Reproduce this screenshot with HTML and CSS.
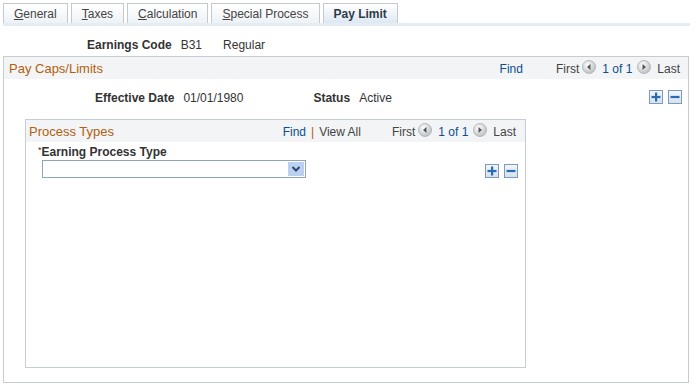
FILE: index.html
```html
<!DOCTYPE html>
<html>
<head>
<meta charset="utf-8">
<link rel="stylesheet" href="styles.css">
</head>
<body>
<div class="tabs">
  <div class="tab"><u>G</u>eneral</div>
  <div class="tab"><u>T</u>axes</div>
  <div class="tab"><u>C</u>alculation</div>
  <div class="tab"><u>S</u>pecial Process</div>
  <div class="tab active">Pay Limit</div>
</div>
<div class="ecrow">
  <span class="lbl ec-lbl">Earnings Code</span>
  <span class="val">B31</span>
  <span class="val desc">Regular</span>
</div>
<div class="box outer">
  <div class="hdr">
    <span class="title">Pay Caps/Limits</span>
    <span class="nav">
      <a class="link">Find</a>
      <span class="first wide">First</span>
      <span class="arr"><svg width="14" height="14" viewBox="0 0 14 14"><defs><radialGradient id="g1" cx="40%" cy="35%" r="70%"><stop offset="0" stop-color="#ffffff"/><stop offset="1" stop-color="#b8bcc0"/></radialGradient></defs><circle cx="7" cy="7" r="6.5" fill="url(#g1)" stroke="#a9adb1" stroke-width="0.8"/><path d="M8.5 4 L5 7 L8.5 10 Z" fill="#555"/></svg></span>
      <a class="link cnt">1 of 1</a>
      <span class="arr"><svg width="14" height="14" viewBox="0 0 14 14"><circle cx="7" cy="7" r="6.5" fill="url(#g1)" stroke="#a9adb1" stroke-width="0.8"/><path d="M5.5 4 L9 7 L5.5 10 Z" fill="#555"/></svg></span>
      <span class="last">Last</span>
    </span>
  </div>
  <div class="effrow">
    <span class="lbl eff-lbl">Effective Date</span>
    <span class="val">01/01/1980</span>
    <span class="lbl st-lbl">Status</span>
    <span class="val">Active</span>
    <span class="btns">
      <span class="pm"><svg width="10" height="10" viewBox="0 0 10 10"><rect x="4" y="0.5" width="2.2" height="9" fill="#2a6bb3"/><rect x="0.5" y="3.9" width="9" height="2.2" fill="#2a6bb3"/></svg></span>
      <span class="pm"><svg width="10" height="10" viewBox="0 0 10 10"><rect x="0.5" y="3.9" width="9" height="2.2" fill="#2a6bb3"/></svg></span>
    </span>
  </div>
  <div class="box inner">
    <div class="hdr ihdr">
      <span class="title">Process Types</span>
      <span class="nav">
        <a class="link">Find</a><span class="sep">|</span><span class="viewall">View All</span>
        <span class="first">First</span>
        <span class="arr"><svg width="14" height="14" viewBox="0 0 14 14"><circle cx="7" cy="7" r="6.5" fill="url(#g1)" stroke="#a9adb1" stroke-width="0.8"/><path d="M8.5 4 L5 7 L8.5 10 Z" fill="#555"/></svg></span>
        <a class="link cnt">1 of 1</a>
        <span class="arr"><svg width="14" height="14" viewBox="0 0 14 14"><circle cx="7" cy="7" r="6.5" fill="url(#g1)" stroke="#a9adb1" stroke-width="0.8"/><path d="M5.5 4 L9 7 L5.5 10 Z" fill="#555"/></svg></span>
        <span class="last">Last</span>
      </span>
    </div>
    <div class="eptlbl"><span class="req">*</span>Earning Process Type</div>
    <div class="selrow">
      <div class="select"><span class="selbtn"><svg width="10" height="8" viewBox="0 0 10 8"><path d="M1.5 2 L5 5.5 L8.5 2" fill="none" stroke="#2d4a6e" stroke-width="2"/></svg></span></div>
      <span class="btns ibtns">
        <span class="pm"><svg width="10" height="10" viewBox="0 0 10 10"><rect x="4" y="0.5" width="2.2" height="9" fill="#2a6bb3"/><rect x="0.5" y="3.9" width="9" height="2.2" fill="#2a6bb3"/></svg></span>
        <span class="pm"><svg width="10" height="10" viewBox="0 0 10 10"><rect x="0.5" y="3.9" width="9" height="2.2" fill="#2a6bb3"/></svg></span>
      </span>
    </div>
  </div>
</div>
</body>
</html>
```
FILE: styles.css
```css
* { box-sizing: border-box; }
body {
  margin: 0;
  font-family: "Liberation Sans", Arial, sans-serif;
  font-size: 12px;
  color: #333;
  background: #fff;
}
.tabs {
  display: flex;
  gap: 3px;
  margin: 3px 5px 0 3px;
  height: 23px;
  border-bottom: 3px solid #e4ecf4;
}
.tab {
  height: 20px;
  padding: 3px 10px 0 10px;
  border: 1px solid #c3c9cf;
  border-bottom: none;
  background: linear-gradient(#ffffff, #eef2f5);
  color: #444;
  line-height: 15px;
}
.tab u { text-decoration: underline; }
.tab.active {
  font-weight: bold;
  color: #2f3a4a;
  background: linear-gradient(#ffffff, #dde8f3);
  height: 20px;
}
.ecrow {
  display: flex;
  align-items: center;
  margin-top: 12px;
  height: 14px;
}
.lbl { font-weight: bold; color: #333; }
.ec-lbl { margin-left: 87px; }
.val { margin-left: 9px; }
.desc { margin-left: 21px; }
.box {
  border: 1px solid #c6ccd3;
}
.outer {
  margin: 4px 0 0 3px;
  width: 686px;
  height: 327px;
}
.hdr {
  display: flex;
  align-items: center;
  justify-content: space-between;
  height: 22px;
  background: #f2f4f5;
  padding: 1px 8px 0 5px;
}
.title { color: #b3600f; font-size: 13px; }
.nav { display: flex; align-items: center; }
.link { color: #0c4f91; }
.first { margin-left: 31px; margin-right: 3px; color: #444; }
.first.wide { margin-left: 33px; }
.arr { display: inline-flex; width: 14px; height: 14px; margin-top: -3px; }
.cnt { margin: 0 5px 0 6px; }
.last { margin-left: 6px; color: #444; }
.sep { color: #b3600f; margin: 0 5px 0 5px; }
.viewall { color: #444; }
.effrow {
  display: flex;
  align-items: center;
  height: 14px;
  margin-top: 12px;
}
.eff-lbl { margin-left: 91px; }
.st-lbl { margin-left: 70px; }
.btns { display: flex; gap: 5px; margin-left: auto; margin-right: 6px; margin-top: -2px; }
.pm {
  width: 14px;
  height: 14px;
  border: 1px solid #7f9bbb;
  background: linear-gradient(#f2f6fb, #d4e1ef);
  display: inline-flex;
  align-items: center;
  justify-content: center;
}
.inner {
  margin: 14px 0 0 21px;
  width: 501px;
  height: 249px;
}
.ihdr { padding-right: 9px; padding-left: 3px; }
.eptlbl {
  font-weight: bold;
  margin: 3px 0 0 12px;
  height: 14px;
}
.req { font-weight: normal; font-size: 9px; vertical-align: 3px; }
.selrow {
  display: flex;
  align-items: flex-end;
  margin-top: 1px;
}
.select {
  width: 264px;
  height: 18px;
  margin-left: 16px;
  border: 1px solid #8ea4bd;
  background: #fff;
  display: flex;
  justify-content: flex-end;
  padding: 1px;
}
.selbtn {
  width: 16px;
  height: 14px;
  background: #bcd0f2;
  display: inline-flex;
  align-items: center;
  justify-content: center;
}
.ibtns { margin-right: 7px; margin-bottom: 0; }
```
